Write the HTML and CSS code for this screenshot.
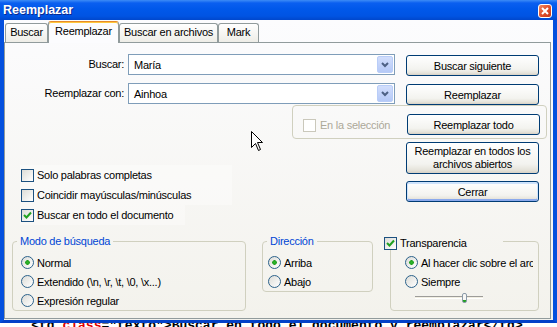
FILE: index.html
```html
<!DOCTYPE html>
<html>

<head>
    <title>Reemplazar</title>
    <link rel="stylesheet" href="styles.css">
</head>

<body>
    <div class="window">
        <div class="titlebar">
            <span class="title">Reemplazar</span>
            <span class="close-btn">
                <svg width="8" height="8" viewBox="0 0 8 8"><path d="M1 1 L7 7 M7 1 L1 7" stroke="#fff" stroke-width="2"/></svg>
            </span>
        </div>

        <div class="frame">
            <div class="client">
                <div class="tabs">
                    <div class="tab tab-find">Buscar</div>
                    <div class="tab tab-replace active">Reemplazar</div>
                    <div class="tab tab-files">Buscar en archivos</div>
                    <div class="tab tab-mark">Mark</div>
                </div>

                <div class="page">
                    <div class="field-row first">
                        <label class="field-label">Buscar:</label>
                        <div class="combo">
                            <span class="combo-text">María</span>
                            <span class="combo-btn">
                                <svg width="16" height="17" viewBox="0 0 16 17"><path d="M5 7 L8 10 L11 7" fill="none" stroke="#4d6185" stroke-width="2"/></svg>
                            </span>
                        </div>
                        <button class="btn">Buscar siguiente</button>
                    </div>

                    <div class="field-row second">
                        <label class="field-label">Reemplazar con:</label>
                        <div class="combo">
                            <span class="combo-text">Ainhoa</span>
                            <span class="combo-btn">
                                <svg width="16" height="17" viewBox="0 0 16 17"><path d="M5 7 L8 10 L11 7" fill="none" stroke="#4d6185" stroke-width="2"/></svg>
                            </span>
                        </div>
                        <button class="btn">Reemplazar</button>
                    </div>

                    <div class="selection-box">
                        <div class="check-label disabled">
                            <span class="checkbox"></span>En la selección
                        </div>
                        <button class="btn">Reemplazar todo</button>
                    </div>

                    <div class="lower-row">
                        <div class="options">
                            <div class="option wide"><span class="checkbox"></span>Solo palabras completas</div>
                            <div class="option wide"><span class="checkbox"></span>Coincidir mayúsculas/minúsculas</div>
                            <div class="option">
                                <span class="checkbox checked">
                                    <svg width="11" height="11" viewBox="0 0 11 11"><path d="M2 5 L4.5 7.5 L9 2.5" fill="none" stroke="#21a121" stroke-width="2"/></svg>
                                </span>Buscar en todo el documento
                            </div>
                        </div>
                        <div class="side-buttons">
                            <button class="btn btn-tall">Reemplazar en todos los archivos abiertos</button>
                            <button class="btn btn-default">Cerrar</button>
                        </div>
                    </div>

                    <div class="groups">
                        <fieldset class="group group-mode">
                            <legend>Modo de búsqueda</legend>
                            <div class="radio-row"><span class="radio on"></span>Normal</div>
                            <div class="radio-row"><span class="radio"></span>Extendido (\n, \r, \t, \0, \x...)</div>
                            <div class="radio-row"><span class="radio"></span>Expresión regular</div>
                        </fieldset>

                        <fieldset class="group group-dir">
                            <legend>Dirección</legend>
                            <div class="radio-row"><span class="radio on"></span>Arriba</div>
                            <div class="radio-row"><span class="radio"></span>Abajo</div>
                        </fieldset>

                        <fieldset class="group group-trans">
                            <legend>
                                <span class="checkbox checked">
                                    <svg width="11" height="11" viewBox="0 0 11 11"><path d="M2 5 L4.5 7.5 L9 2.5" fill="none" stroke="#21a121" stroke-width="2"/></svg>
                                </span>Transparencia
                            </legend>
                            <div class="radio-row clip"><span class="radio on"></span>Al hacer clic sobre el archivo</div>
                            <div class="radio-row"><span class="radio"></span>Siempre</div>
                            <div class="slider-row">
                                <div class="slider"><span class="thumb"></span></div>
                            </div>
                        </fieldset>
                    </div>
                </div>
            </div>
        </div>
    </div>

    <div class="editor"><div class="editor-line">    &lt;td <span class="kw">class</span>="texto"&gt;Buscar en todo el documento y reemplazar&lt;/td&gt;</div></div>

    <svg class="cursor" width="13" height="21" viewBox="0 0 13 21">
        <path d="M0.5 0.5 L0.5 16.5 L4.5 12.5 L7.5 19.5 L9.5 18.5 L6.5 11.5 L11.5 11.5 Z" fill="#fff" stroke="#000" stroke-width="1"/>
    </svg>
</body>

</html>
```

FILE: styles.css
```css
* {
    box-sizing: border-box;
}

html,
body {
    margin: 0;
}

body {
    width: 557px;
    height: 327px;
    overflow: hidden;
    position: relative;
    background: #fff;
    font-family: 'Liberation Sans', Arial, sans-serif;
    font-size: 11px;
    letter-spacing: -0.25px;
    color: #000;
}

.window {
    height: 323px;
    display: flex;
    flex-direction: column;
}

.titlebar {
    height: 20px;
    display: flex;
    align-items: center;
    justify-content: space-between;
    padding: 0 5px 0 3px;
    background: linear-gradient(#3d8cf6 0, #0a5ff0 3px, #0058ea 9px, #0054e3 16px, #0047cc 20px);
}

.title {
    color: #fff;
    font-weight: bold;
    font-size: 12.5px;
    letter-spacing: 0;
    text-shadow: 1px 1px 0 #0b2a8f;
}

.close-btn {
    width: 14px;
    height: 14px;
    margin-top: 2px;
    display: flex;
    align-items: center;
    justify-content: center;
    background: linear-gradient(135deg, #f08b63, #e0502c 50%, #c4391a);
    border: 1px solid #fff;
    border-radius: 3px;
}

.frame {
    flex: 1;
    display: flex;
    border-left: 4px solid #0450de;
    border-right: 4px solid #0450de;
    border-bottom: 3px solid #0341c8;
}

.client {
    flex: 1;
    display: flex;
    flex-direction: column;
    padding: 1px 2px 1px 0;
    background: linear-gradient(#fcfcfe, #f3f2ec);
}

/* tabs */

.tabs {
    height: 22px;
    display: flex;
    align-items: flex-end;
    padding-left: 1px;
    margin-bottom: -1px;
    position: relative;
    z-index: 1;
}

.tab {
    height: 19px;
    margin-bottom: 1px;
    line-height: 17px;
    text-align: center;
    border: 1px solid #919b9c;
    border-bottom: none;
    border-radius: 3px 3px 0 0;
    background: linear-gradient(#ffffff, #eeede7);
}

.tab.active {
    height: 22px;
    margin-bottom: 0;
    line-height: 19px;
    background: #fcfcfe;
    border-top: 1px solid #e68b2c;
    box-shadow: inset 0 1px 0 #ffc83c;
}

.tab-find { width: 43px; }
.tab-replace { width: 71px; }
.tab-files { width: 99px; }
.tab-mark { width: 41px; }

.page {
    flex: 1;
    border: 1px solid #919b9c;
    display: flex;
    flex-direction: column;
}

/* search / replace fields */

.field-row {
    display: flex;
    align-items: flex-start;
    height: 22px;
}

.field-row.first {
    margin-top: 11px;
}

.field-row.second {
    margin-top: 7px;
}

.field-label {
    width: 119px;
    margin-right: 4px;
    text-align: right;
    line-height: 21px;
}

.combo {
    width: 267px;
    height: 21px;
    display: flex;
    align-items: center;
    padding: 1px;
    border: 1px solid #7f9db9;
    background: #fff;
}

.combo-text {
    flex: 1;
    padding-left: 4px;
}

.combo-btn {
    width: 16px;
    height: 17px;
    display: flex;
    border: 1px solid #b9cdf8;
    border-radius: 2px;
    background: linear-gradient(#d2defc, #b5c9f7);
}

.combo-btn svg {
    margin: -1px;
}

.btn {
    width: 133px;
    height: 21px;
    margin: 1px 0 0 11px;
    padding: 0;
    font: inherit;
    letter-spacing: inherit;
    color: #000;
    border: 1px solid #003c74;
    border-radius: 3px;
    background: linear-gradient(#ffffff, #f3f3ef 70%, #e5e3da 90%, #d6d0c5);
}

/* selection group */

.selection-box {
    width: 255px;
    height: 34px;
    margin-left: 287px;
    display: flex;
    align-items: flex-end;
    justify-content: space-between;
    padding: 0 6px 3px 10px;
    border: 1px solid #d0d0bf;
    border-radius: 4px;
}

.selection-box .btn {
    margin: 0;
}

.check-label {
    display: flex;
    align-items: center;
    line-height: 14px;
    margin-bottom: 3px;
}

.check-label.disabled {
    color: #aca899;
}

.checkbox {
    width: 13px;
    height: 13px;
    flex-shrink: 0;
    display: inline-flex;
    margin-right: 3px;
    border: 1px solid #1c5180;
    background: linear-gradient(135deg, #dcdcd7, #ffffff);
}

.disabled .checkbox {
    margin-right: 4px;
    border-color: #cac8bb;
    background: #fff;
}

/* options + side buttons */

.lower-row {
    display: flex;
    margin-top: 3px;
}

.options {
    flex: 1;
    padding: 23px 0 0 15px;
    display: flex;
    flex-direction: column;
}

.option {
    width: 165px;
    height: 20px;
    display: flex;
    align-items: center;
    padding-left: 1px;
    background: rgba(255, 255, 255, 0.35);
}

.option.wide {
    width: 212px;
}

.side-buttons {
    width: 133px;
    margin-right: 11px;
    display: flex;
    flex-direction: column;
}

.side-buttons .btn {
    margin: 0;
}

.btn-tall {
    height: 32px;
    line-height: 13px;
}

.btn-default {
    margin-top: 7px !important;
    box-shadow: inset 0 1px 0 1px #cee3fc, inset 0 -1px 0 1px #8aa9ec;
}

/* group boxes */

.groups {
    display: flex;
    align-items: flex-start;
    margin-top: 9px;
}

.group {
    flex: none;
    margin: 0;
    padding: 5px 0 0;
    min-width: 0;
    border: 1px solid #d0d0bf;
    border-radius: 4px;
}

.group legend {
    margin-left: 4px;
    padding: 0 3px;
    line-height: 14px;
    color: #0046d5;
}

.group-mode {
    width: 234px;
    margin-left: 7px;
    padding-left: 8px;
}

.group-mode legend {
    margin-left: -4px;
}

.group-dir {
    width: 111px;
    margin-left: 16px;
    padding-left: 5px;
}

.group-dir legend {
    margin-left: -1px;
}

.group-trans {
    width: 149px;
    margin-left: 17px;
    margin-top: -2px;
    padding: 3px 0 0 14px;
}

.group-trans legend {
    width: 119px;
    margin-left: -21px;
    padding: 4px 0 0;
    color: #000;
    display: flex;
    align-items: center;
}

.radio-row {
    height: 19px;
    display: flex;
    align-items: center;
    white-space: nowrap;
}

.radio-row.clip {
    width: 128px;
    overflow: hidden;
}

.radio {
    width: 13px;
    height: 13px;
    flex-shrink: 0;
    margin-right: 3px;
    border: 1px solid #2c628b;
    border-radius: 50%;
    background: linear-gradient(135deg, #dcdcd7, #ffffff);
}

.radio.on {
    background:
        radial-gradient(circle at 50% 50%, #2fb82c 0, #21a121 2px, transparent 2.6px),
        linear-gradient(135deg, #dcdcd7, #ffffff);
}

.slider-row {
    height: 19px;
    padding: 2px 0 0 10px;
}

.slider {
    width: 68px;
    height: 10px;
    display: flex;
    background: linear-gradient(transparent 3px, #9d9c99 3px, #9d9c99 4px, #f1efe2 4px, #f1efe2 5px, #ffffff 5px, #ffffff 6px, transparent 6px);
}

.thumb {
    width: 5px;
    height: 10px;
    margin-left: 47px;
    border: 1px solid #8a9aa8;
    border-radius: 2px;
    background: linear-gradient(#f7f7f4 0, #f7f7f4 6px, #21a121 6px);
}

/* editor behind the dialog */

.editor {
    height: 4px;
    overflow: hidden;
    background: #fff;
}

.editor-line {
    margin-top: -4px;
    font-family: 'Liberation Mono', monospace;
    font-size: 13px;
    line-height: 13px;
    font-weight: bold;
    letter-spacing: 0;
    white-space: pre;
    color: #000;
}

.editor-line .kw {
    color: #e00000;
}

.cursor {
    position: absolute;
    left: 251px;
    top: 131px;
}
```
